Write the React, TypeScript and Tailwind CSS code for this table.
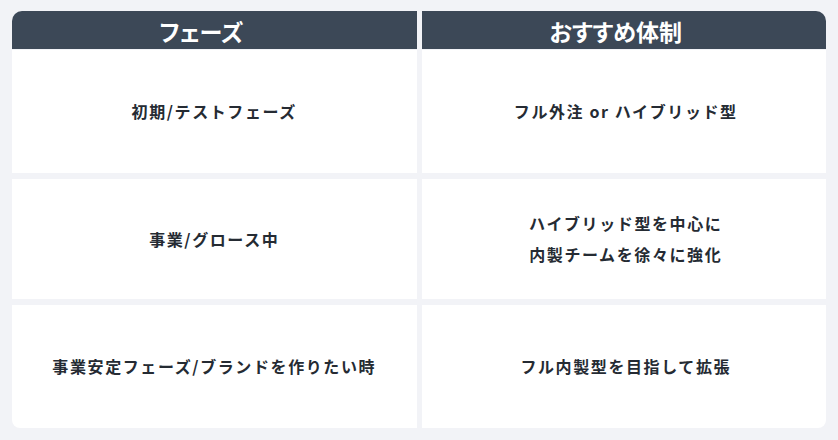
import React from "react";

const rows: { left: string[]; right: string[]; h: string }[] = [
  { left: ["初期/テストフェーズ"], right: ["フル外注 or ハイブリッド型"], h: "h-[123px]" },
  { left: ["事業/グロース中"], right: ["ハイブリッド型を中心に", "内製チームを徐々に強化"], h: "h-[120px]" },
  { left: ["事業安定フェーズ/ブランドを作りたい時"], right: ["フル内製型を目指して拡張"], h: "h-[123px]" },
];

export default function App() {
  return (
    <div
      className="w-[838px] h-[440px] bg-[#f2f3f7] pt-[11px] px-[12px] pb-[12px]"
      style={{ fontFamily: '"Noto Sans CJK JP", "Noto Sans", sans-serif' }}
    >
      <div className="grid grid-cols-2 gap-x-[5px]">
        <div className="h-[38px] bg-[#3c4857] rounded-tl-[10px] flex items-center justify-center pr-[26px] pt-[2px] text-white font-bold text-[23px] [font-feature-settings:'palt']">
          フェーズ
        </div>
        <div className="h-[38px] bg-[#3c4857] rounded-tr-[10px] flex items-center justify-center pr-[16px] pt-[2px] text-white font-bold text-[23px] [font-feature-settings:'palt']">
          おすすめ体制
        </div>
      </div>
      <div className="h-[1px]" />
      <div className="flex flex-col gap-[6px]">
        {rows.map((r, i) => (
          <div key={i} className="grid grid-cols-2 gap-x-[5px]">
            <div
              className={`${r.h} bg-white flex flex-col items-center justify-center text-[#252b33] font-bold text-[16px] leading-[31px] tracking-[0.1em] ${
                i === rows.length - 1 ? "rounded-bl-[8px]" : ""
              }`}
            >
              {r.left.map((t) => (
                <div key={t}>{t}</div>
              ))}
            </div>
            <div
              className={`${r.h} bg-white flex flex-col items-center justify-center pl-[4px] text-[#252b33] font-bold text-[16px] leading-[31px] tracking-[0.1em] ${
                i === rows.length - 1 ? "rounded-br-[8px]" : ""
              }`}
            >
              {r.right.map((t) => (
                <div key={t}>{t}</div>
              ))}
            </div>
          </div>
        ))}
      </div>
    </div>
  );
}
